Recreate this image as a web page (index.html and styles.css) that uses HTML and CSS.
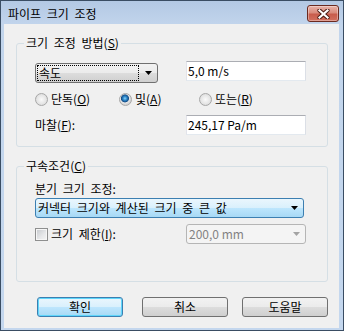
FILE: index.html
```html
<!DOCTYPE html>
<html>
<head>
<meta charset="utf-8">
<title>파이프 크기 조정</title>
<link rel="stylesheet" href="styles.css">
</head>
<body>
<div class="window">
<div class="titlebar">
	<span class="title">파이프 크기 조정</span>
	<div class="close-btn">
		<svg width="13" height="10" viewBox="0 0 13 10"><path d="M2.5 1.5 L10.5 8.5 M10.5 1.5 L2.5 8.5" stroke="#4a1a12" stroke-width="4.2" stroke-linecap="round" fill="none"/><path d="M2.5 1.5 L10.5 8.5 M10.5 1.5 L2.5 8.5" stroke="#fff" stroke-width="2.2" stroke-linecap="square" fill="none"/></svg>
	</div>
</div>
<div class="client">
<fieldset class="group group-method">
	<legend>크기 조정 방법(<u>S</u>)</legend>
	<div class="group-body">
		<div class="row row-speed">
			<div class="combo combo-plain combo-speed">
				<span class="combo-text focused">속도</span>
				<span class="combo-arrow"><svg width="7" height="4" viewBox="0 0 7 4"><polygon points="0,0 7,0 3.5,4" fill="#000"/></svg></span>
			</div>
			<div class="textbox">5,0 m/s</div>
		</div>
		<div class="row radios">
			<label class="radio-item"><span class="radio"></span><span>단독(<u>O</u>)</span></label>
			<label class="radio-item"><span class="radio checked"></span><span>및(<u>A</u>)</span></label>
			<label class="radio-item"><span class="radio"></span><span>또는(<u>R</u>)</span></label>
		</div>
		<div class="row row-friction">
			<span class="field-label">마찰(<u>F</u>):</span>
			<div class="textbox">245,17 Pa/m</div>
		</div>
	</div>
</fieldset>
<fieldset class="group group-constraint">
	<legend>구속조건(<u>C</u>)</legend>
	<div class="group-body">
		<div class="field-label">분기 크기 조정:</div>
		<div class="combo combo-hot combo-branch">
			<span class="combo-text">커넥터 크기와 계산된 크기 중 큰 값</span>
			<span class="combo-arrow"><svg width="7" height="4" viewBox="0 0 7 4"><polygon points="0,0 7,0 3.5,4" fill="#000"/></svg></span>
		</div>
		<div class="row row-limit">
			<label class="check-item"><span class="checkbox"></span><span>크기 제한(<u>I</u>):</span></label>
			<div class="combo combo-disabled">
				<span class="combo-text">200,0 mm</span>
				<span class="combo-arrow"><svg width="7" height="4" viewBox="0 0 7 4"><polygon points="0,0 7,0 3.5,4" fill="#a3a3a3"/></svg></span>
			</div>
		</div>
	</div>
</fieldset>
<div class="buttons">
	<div class="btn btn-default">확인</div>
	<div class="btn btn-cancel">취소</div>
	<div class="btn btn-help">도움말</div>
</div>
</div>
</div>
</body>
</html>
```

FILE: styles.css
```css
* {
	box-sizing: border-box;
}
body {
	margin: 0;
	font-family: "Noto Sans CJK KR", sans-serif;
	font-size: 12px;
	color: #000;
	background: #fff;
}
u {
	text-decoration: underline;
	text-underline-offset: 1px;
}
.window {
	width: 344px;
	height: 331px;
	display: flex;
	flex-direction: column;
	border: 1px solid #3a4d63;
	padding: 0 4px 2px 3px;
	background: linear-gradient(to bottom, #b3c9e4 0%, #c2d5ec 24px, #c4d7ee 100%);
}
.titlebar {
	height: 23px;
	display: flex;
	align-items: flex-start;
	justify-content: space-between;
}
.title {
	margin: 5px 0 0 4px;
	line-height: 16px;
	word-spacing: 3px;
}
.close-btn {
	width: 32px;
	height: 17px;
	margin-top: 4px;
	border: 1px solid #6b2a20;
	border-radius: 3px;
	background: linear-gradient(to bottom, #e8b2a8 0%, #d98b7c 45%, #c85c4c 55%, #d2705e 100%);
	box-shadow: inset 0 0 0 1px rgba(255,255,255,0.35);
	display: flex;
	align-items: center;
	justify-content: center;
}
.client {
	flex: 1;
	background: #f0f0f0;
	display: flex;
	flex-direction: column;
}
.group {
	width: 312px;
	margin: 12px 0 0 12px;
	padding: 0;
	border: 1px solid #d5dfe5;
	border-radius: 3px;
}
.group legend {
	margin-left: 7px;
	padding: 0 2px;
	line-height: 14px;
	word-spacing: 3px;
}
.group-body {
	padding: 11px 21px 11px 18px;
}
.group-constraint {
	margin-top: 12px;
}
.group-constraint .group-body {
	padding-top: 9px;
	padding-bottom: 37px;
}
.row {
	display: flex;
	justify-content: space-between;
	align-items: center;
}
.row-speed {
	align-items: flex-start;
}
.combo {
	height: 20px;
	display: flex;
	align-items: center;
	border-radius: 3px;
}
.combo-text {
	flex: 1;
	line-height: 14px;
	padding-left: 2px;
	white-space: nowrap;
	word-spacing: 3px;
}
.combo-arrow {
	width: 18px;
	display: flex;
	justify-content: center;
	align-items: center;
}
.combo-arrow svg {
	display: block;
}
.combo-plain {
	border: 1px solid #707070;
	background: linear-gradient(to bottom, #f2f2f2 0%, #ebebeb 50%, #dddddd 50%, #cfcfcf 100%);
}
.combo-speed {
	width: 123px;
	margin-top: 2px;
}
.combo-speed .combo-text.focused {
	margin: 0 0 0 1px;
	height: 16px;
	border: 1px dotted #000;
	padding-left: 1px;
}
.combo-hot {
	border: 1px solid #3c7fb1;
	background: linear-gradient(to bottom, #eaf6fd 0%, #d9f0fc 50%, #bee6fd 50%, #a7d9f5 100%);
}
.combo-branch {
	margin-top: 2px;
	width: 269px;
}
.combo-disabled {
	width: 120px;
	border: 1px solid #b5b5b5;
	background: #f4f4f4;
	color: #838383;
}
.combo-disabled .combo-text {
	word-spacing: 0;
}
.textbox {
	width: 120px;
	height: 20px;
	border: 1px solid;
	border-color: #abadb3 #dbdfe6 #e3e9ef #e2e3ea;
	background: #fff;
	padding-left: 1px;
	line-height: 18px;
}
.radios {
	justify-content: flex-start;
	margin-top: 9px;
	height: 14px;
}
.radio-item,
.check-item {
	display: flex;
	align-items: center;
	gap: 3px;
	line-height: 14px;
	word-spacing: 3px;
}
.radio-item:nth-child(1) {
	width: 84px;
}
.radio-item:nth-child(2) {
	width: 80px;
}
.radio {
	width: 13px;
	height: 13px;
	border-radius: 50%;
	border: 1px solid #a7a7a7;
	background: radial-gradient(circle at 50% 50%, #fafafa 0%, #e6e6e6 55%, #d2d2d2 100%);
}
.radio.checked {
	background: radial-gradient(circle at 45% 40%, #8fd3f7 0px, #2a86c9 2px, #164d86 3.6px, #e8e8e8 4.4px, #d4d4d4 6px);
}
.row-friction {
	margin-top: 9px;
}
.field-label {
	line-height: 14px;
	word-spacing: 3px;
}
.row-limit {
	margin-top: 6px;
}
.checkbox {
	width: 13px;
	height: 13px;
	border: 1px solid #8e8f8f;
	background: linear-gradient(135deg, #c4c7cc 0%, #e7e8ea 60%, #f5f5f5 100%);
	box-shadow: inset 0 0 0 1px #f6f6f6;
}
.buttons {
	display: flex;
	margin-top: 15px;
	padding-left: 33px;
}
.btn {
	width: 86px;
	height: 20px;
	border: 1px solid #707070;
	border-radius: 3px;
	background: linear-gradient(to bottom, #f2f2f2 0%, #ebebeb 50%, #dddddd 50%, #cfcfcf 100%);
	display: flex;
	align-items: center;
	justify-content: center;
	line-height: 14px;
}
.btn-default {
	border-color: #3c7fb1;
	box-shadow: inset 0 0 0 1px #5fd6fb;
	background: linear-gradient(to bottom, #eaf6fd 0%, #d9f0fc 50%, #bee6fd 50%, #a7d9f5 100%);
}
.btn-cancel {
	margin-left: 19px;
}
.btn-help {
	margin-left: 14px;
}
```
